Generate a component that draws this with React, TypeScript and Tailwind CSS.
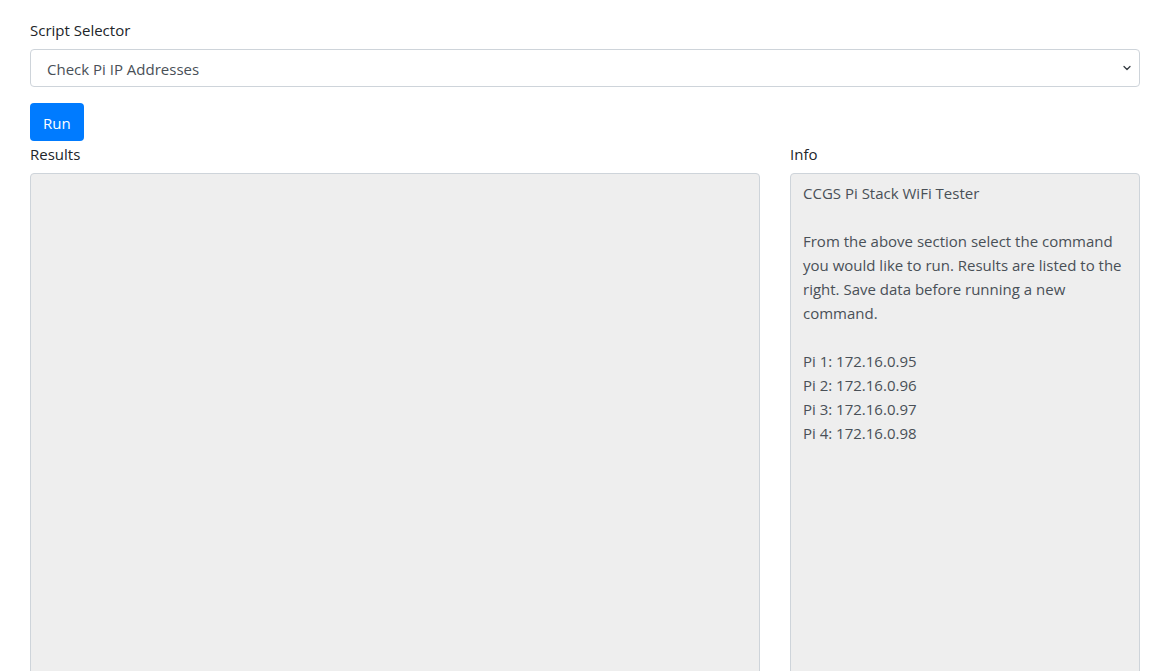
import { ChevronDown } from 'lucide-react';

const scripts = ['Check Pi IP Addresses', 'Ping All Pis', 'WiFi Signal Strength'];

const info = `CCGS Pi Stack WiFi Tester

From the above section select the command you would like to run. Results are listed to the right. Save data before running a new command.

Pi 1: 172.16.0.95
Pi 2: 172.16.0.96
Pi 3: 172.16.0.97
Pi 4: 172.16.0.98`;

export default function App() {
  return (
    <div
      className="min-h-screen bg-white px-[30px] pt-[17px] text-[15px] leading-6 text-[#212529]"
      style={{ fontFamily: '"Segoe UI", "Open Sans", sans-serif' }}
    >
      <div className="w-[1110px]">
        <div className="mb-4">
          <label className="mb-[7px] block pt-px">Script Selector</label>
          <div className="relative">
            <select
              defaultValue={scripts[0]}
              className="h-[38px] w-full appearance-none rounded border border-[#ced4da] bg-white pl-4 pr-8 pt-[2px] text-[#495057] outline-none"
            >
              {scripts.map((s) => (
                <option key={s}>{s}</option>
              ))}
            </select>
            <ChevronDown
              className="pointer-events-none absolute right-[7px] top-[13px] h-[12px] w-[12px] text-[#343a40]"
              strokeWidth={2.5}
            />
          </div>
        </div>

        <button className="h-[38px] rounded bg-[#007bff] px-[13px] pt-px text-white">Run</button>

        <div className="flex gap-[30px]">
          <div className="w-[730px]">
            <label className="mb-[7px] block pt-px">Results</label>
            <textarea
              readOnly
              className="block h-[520px] w-full resize-none rounded border border-[#ced4da] bg-[#eeeeee] px-3 pb-1.5 pt-[7px] text-[#495057] outline-none"
            />
          </div>
          <div className="w-[350px]">
            <label className="mb-[7px] block pt-px">Info</label>
            <textarea
              readOnly
              value={info}
              className="block h-[520px] w-full resize-none rounded border border-[#ced4da] bg-[#eeeeee] px-3 pb-1.5 pt-[7px] text-[#495057] outline-none"
            />
          </div>
        </div>
      </div>
    </div>
  );
}
